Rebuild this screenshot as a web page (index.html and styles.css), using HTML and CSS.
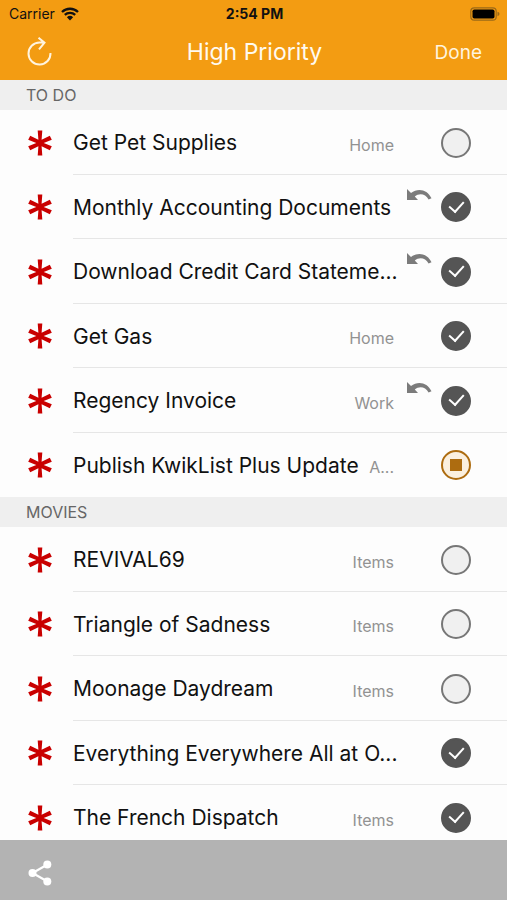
FILE: index.html
```
<!DOCTYPE html>
<html lang="en">
<head>
<meta charset="utf-8">
<meta name="viewport" content="width=device-width, initial-scale=1">
<title>High Priority</title>
<link rel="stylesheet" href="styles.css">
</head>
<body>
<svg class="sprite" aria-hidden="true">
  <symbol id="star" viewBox="0 0 24 26">
    <path d="M9.700 .5h4.600l-.7 9.300 8.200-4 2 4-8.100 3.200 8.100 3.200-2 4-8.200-4 .7 9.300H9.700l.7-9.300-8.200 4-2-4L8.300 13 .2 9.800l2-4 8.200 4z"/>
  </symbol>
  <symbol id="undo" viewBox="0 0 26 14">
    <path d="M1 1v11h11L8.800 8.500C13 4.800 19.500 5.500 22.600 11.500L25.500 10.300C21.500 1.500 12 -.5 5 5z"/>
  </symbol>
</svg>
<header class="top">
  <div class="status">
    <span class="carrier">Carrier
      <svg class="wifi" viewBox="0 0 18 14" aria-hidden="true">
        <path d="M1 5a11.500 11.500 0 0 1 16 0M3.800 7.900a7.500 7.500 0 0 1 10.400 0" fill="none" stroke="#111" stroke-width="2.300"/>
        <path d="M5.900 10.200a4.500 4.500 0 0 1 6.200 0L9 13.500z" fill="#111"/>
      </svg>
    </span>
    <span class="time">2:54 PM</span>
    <svg class="battery" viewBox="0 0 30 14" aria-hidden="true">
      <rect x=".8" y=".8" width="25.400" height="12.400" rx="3.500" fill="none" stroke="#9b6918" stroke-width="1.200"/>
      <rect x="2.500" y="2.500" width="22" height="9" rx="1.800"/>
      <path d="M27.500 4.800q2 .6 2 2.200t-2 2.200z" fill="#9b6918"/>
    </svg>
  </div>
  <nav class="bar">
    <button class="refresh" type="button" aria-label="Refresh">
      <svg viewBox="0 0 26 30" aria-hidden="true"><path d="M23.500 16A11 11 0 1 1 12.500 5.500H17M11.500 .8l6 4.900-5.500 6.600" fill="none" stroke="#fff4df" stroke-width="2"/></svg>
    </button>
    <h1>High Priority</h1>
    <button class="done" type="button">Done</button>
  </nav>
</header>
<main>
  <section>
    <h2>TO DO</h2>
    <ul>
      <li><svg class="star"><use href="#star"/></svg><div class="text"><label for="t1">Get Pet Supplies</label><span class="tag">Home</span></div><span class="repeat"></span><input type="checkbox" id="t1"></li>
      <li><svg class="star"><use href="#star"/></svg><div class="text"><label for="t2">Monthly Accounting Documents</label></div><svg class="repeat"><use href="#undo"/></svg><input type="checkbox" id="t2" checked></li>
      <li><svg class="star"><use href="#star"/></svg><div class="text"><label for="t3">Download Credit Card Stateme...</label></div><svg class="repeat"><use href="#undo"/></svg><input type="checkbox" id="t3" checked></li>
      <li><svg class="star"><use href="#star"/></svg><div class="text"><label for="t4">Get Gas</label><span class="tag">Home</span></div><span class="repeat"></span><input type="checkbox" id="t4" checked></li>
      <li><svg class="star"><use href="#star"/></svg><div class="text"><label for="t5">Regency Invoice</label><span class="tag">Work</span></div><svg class="repeat"><use href="#undo"/></svg><input type="checkbox" id="t5" checked></li>
      <li><svg class="star"><use href="#star"/></svg><div class="text"><label for="t6">Publish KwikList Plus Update</label><span class="tag">A...</span></div><span class="repeat"></span><input class="started" type="checkbox" id="t6"></li>
    </ul>
  </section>
  <section>
    <h2>MOVIES</h2>
    <ul>
      <li><svg class="star"><use href="#star"/></svg><div class="text"><label for="m1">REVIVAL69</label><span class="tag">Items</span></div><span class="repeat"></span><input type="checkbox" id="m1"></li>
      <li><svg class="star"><use href="#star"/></svg><div class="text"><label for="m2">Triangle of Sadness</label><span class="tag">Items</span></div><span class="repeat"></span><input type="checkbox" id="m2"></li>
      <li><svg class="star"><use href="#star"/></svg><div class="text"><label for="m3">Moonage Daydream</label><span class="tag">Items</span></div><span class="repeat"></span><input type="checkbox" id="m3"></li>
      <li><svg class="star"><use href="#star"/></svg><div class="text"><label for="m4">Everything Everywhere All at O...</label></div><span class="repeat"></span><input type="checkbox" id="m4" checked></li>
      <li><svg class="star"><use href="#star"/></svg><div class="text"><label for="m5">The French Dispatch</label><span class="tag">Items</span></div><span class="repeat"></span><input type="checkbox" id="m5" checked></li>
    </ul>
  </section>
</main>
<footer>
  <button class="share" type="button" aria-label="Share">
    <svg viewBox="0 0 24 26" aria-hidden="true"><path d="M19.500 4.500L4.500 13l15 8.500" fill="none" stroke="#fff" stroke-width="2.200"/><circle cx="19.300" cy="4.500" r="4" fill="#fff"/><circle cx="4.500" cy="13" r="4" fill="#fff"/><circle cx="19.300" cy="21.500" r="4" fill="#fff"/></svg>
  </button>
</footer>
</body>
</html>
```
FILE: styles.css
```
* { box-sizing: border-box; }
body {
  margin: 0;
  height: 100vh;
  display: flex;
  flex-direction: column;
  background: #fdfdfd;
  color: #111;
  font-family: Inter, "Liberation Sans", sans-serif;
}
.sprite { display: none; }
svg { display: block; }
button { border: 0; padding: 0; background: none; font: inherit; }
h1, h2, ul { margin: 0; padding: 0; font-weight: 400; }

.top { flex: none; background: #f39c12; }
.status, .bar {
  display: grid;
  grid-template-columns: 1fr auto 1fr;
  align-items: center;
}
.status { height: 27px; padding: 0 7px 0 9px; font-size: 14px; }
.carrier { display: flex; align-items: center; gap: 6px; }
.wifi { width: 18px; height: 14px; }
.time { font-weight: 700; }
.battery { width: 30px; height: 14px; justify-self: end; }
.bar { height: 53px; padding: 0 25px 3px 27px; color: #fff4df; }
.bar h1 { font-size: 23px; color: #fffaf0; }
.refresh { justify-self: start; }
.refresh svg { width: 26px; height: 30px; }
.done { justify-self: end; color: inherit; font-size: 19px; }

main { flex: 1; min-height: 0; overflow: hidden; }
h2 {
  padding: 0 26px;
  line-height: 30px;
  font-size: 16px;
  background: #efefef;
  color: #666;
}
ul { list-style: none; }
li {
  height: 65px;
  padding-left: 28px;
  display: flex;
  align-items: center;
}
li:nth-child(even) { height: 64px; }
li:not(:last-child) { background: linear-gradient(#e6e6e6, #e6e6e6) 73px 100% / 100% 1px no-repeat; }
.star { width: 24px; height: 26px; margin-right: 21px; fill: #c90000; flex: none; }
.text {
  flex: 1;
  min-width: 0;
  display: flex;
  align-items: center;
  justify-content: space-between;
  white-space: nowrap;
}
label { font-size: 21px; }
.tag { padding-top: 4px; font-size: 16px; color: #929292; }
.repeat {
  flex: none;
  align-self: flex-start;
  width: 26px;
  height: 14px;
  margin: 13px 9px 0 12px;
  fill: #7b7b7b;
}
input {
  appearance: none;
  flex: none;
  display: grid;
  place-items: center;
  width: 30px;
  height: 30px;
  margin: 0 36px 0 0;
  border: 2px solid #777;
  border-radius: 50%;
  background: #f0f0f0;
}
input:checked { background: #555; border-color: #555; }
input:checked::before {
  content: "";
  width: 7px;
  height: 12px;
  margin-bottom: 5px;
  border: solid #fff;
  border-width: 0 2px 2px 0;
  transform: rotate(42deg);
}
.started { border-color: #ad6c10; background: #fbf0df; }
.started::before { content: ""; width: 12px; height: 12px; background: #ad6c10; }

footer {
  flex: none;
  height: 60px;
  padding: 6px 28px 0;
  display: flex;
  align-items: center;
  background: #b3b3b3;
}
.share svg { width: 24px; height: 26px; }
```
